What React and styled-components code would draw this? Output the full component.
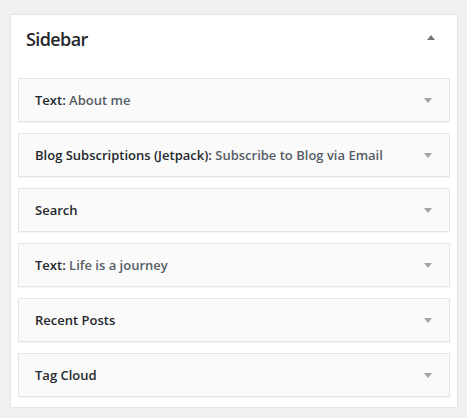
import React from 'react';
import styled, { createGlobalStyle } from 'styled-components';

const GlobalStyle = createGlobalStyle`
  body {
    margin: 0;
    background: #f1f1f1;
    font-family: 'Open Sans', 'Noto Sans', sans-serif;
  }
`;

const Panel = styled.div`
  margin: 14px 0 0 10px;
  width: 448px;
  box-sizing: border-box;
  background: #fff;
  border: 1px solid #e5e5e5;
  box-shadow: 0 1px 1px rgba(0, 0, 0, 0.04);
`;

const Header = styled.div`
  display: flex;
  align-items: flex-start;
  justify-content: space-between;
  height: 63px;
  box-sizing: border-box;
  padding: 13px 22px 0 15px;
`;

const Title = styled.h2`
  margin: 0;
  font-size: 18px;
  line-height: 22px;
  font-weight: 600;
  letter-spacing: -0.6px;
  color: #23282d;
`;

const Arrow = styled.span`
  width: 0;
  height: 0;
  border-left: 4px solid transparent;
  border-right: 4px solid transparent;
  ${(p) =>
    p.$up
      ? `border-bottom: 5px solid #72777c; margin-top: 7px;`
      : `border-top: 5px solid #a0a5aa;`}
`;

const List = styled.div`
  display: flex;
  flex-direction: column;
  gap: 11px;
  padding: 0 7px 10px 7px;
`;

const Widget = styled.div`
  display: flex;
  align-items: center;
  justify-content: space-between;
  height: 44px;
  box-sizing: border-box;
  padding: 0 17px 0 16px;
  background: #fafafa;
  border: 1px solid #e5e5e5;
  box-shadow: 0 1px 1px rgba(0, 0, 0, 0.04);
`;

const Name = styled.span`
  font-size: 13px;
  font-weight: 600;
  color: #23282d;
`;

const Extra = styled.span`
  color: #555d66;
`;

const widgets = [
  { name: 'Text', title: 'About me' },
  { name: 'Blog Subscriptions (Jetpack)', title: 'Subscribe to Blog via Email' },
  { name: 'Search' },
  { name: 'Text', title: 'Life is a journey' },
  { name: 'Recent Posts' },
  { name: 'Tag Cloud' },
];

const App = () => (
  <>
    <GlobalStyle />
    <Panel>
      <Header>
        <Title>Sidebar</Title>
        <Arrow $up />
      </Header>
      <List>
        {widgets.map((w, i) => (
          <Widget key={i}>
            <Name>
              {w.name}
              {w.title && (
                <>
                  : <Extra>{w.title}</Extra>
                </>
              )}
            </Name>
            <Arrow />
          </Widget>
        ))}
      </List>
    </Panel>
  </>
);

export default App;
